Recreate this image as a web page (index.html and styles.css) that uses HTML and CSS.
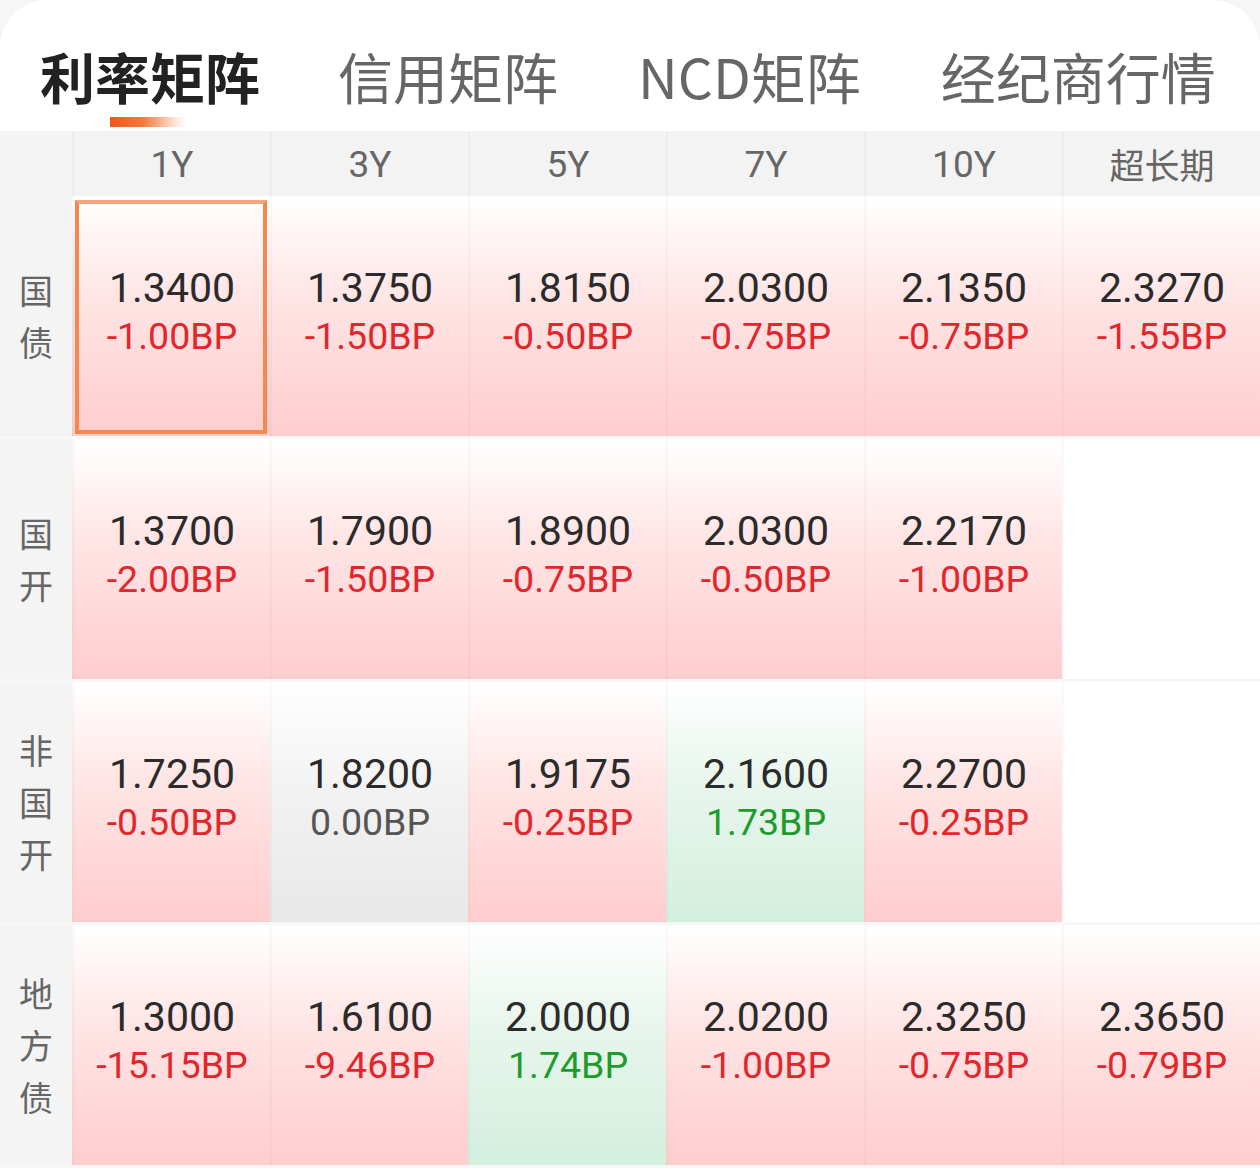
FILE: index.html
```html
<!DOCTYPE html>
<html lang="zh-CN">
<head>
<meta charset="utf-8">
<title>利率矩阵</title>
<link rel="stylesheet" href="styles.css">
</head>
<body>
<div class="card">
  <nav class="tabs">
    <div class="tab active">利率矩阵<span class="bar"></span></div>
    <div class="tab">信用矩阵</div>
    <div class="tab">NCD矩阵</div>
    <div class="tab">经纪商行情</div>
  </nav>
  <div class="matrix">
    <div class="row head">
      <div class="label"></div>
      <div class="hcell">1Y</div>
      <div class="hcell">3Y</div>
      <div class="hcell">5Y</div>
      <div class="hcell">7Y</div>
      <div class="hcell">10Y</div>
      <div class="hcell cjk">超长期</div>
    </div>
    <div class="row">
      <div class="label"><span>国</span><span>债</span></div>
      <div class="cell up selected"><div class="v">1.3400</div><div class="d">-1.00BP</div><span class="ring"></span></div>
      <div class="cell up"><div class="v">1.3750</div><div class="d">-1.50BP</div></div>
      <div class="cell up"><div class="v">1.8150</div><div class="d">-0.50BP</div></div>
      <div class="cell up"><div class="v">2.0300</div><div class="d">-0.75BP</div></div>
      <div class="cell up"><div class="v">2.1350</div><div class="d">-0.75BP</div></div>
      <div class="cell up"><div class="v">2.3270</div><div class="d">-1.55BP</div></div>
    </div>
    <div class="row">
      <div class="label"><span>国</span><span>开</span></div>
      <div class="cell up"><div class="v">1.3700</div><div class="d">-2.00BP</div></div>
      <div class="cell up"><div class="v">1.7900</div><div class="d">-1.50BP</div></div>
      <div class="cell up"><div class="v">1.8900</div><div class="d">-0.75BP</div></div>
      <div class="cell up"><div class="v">2.0300</div><div class="d">-0.50BP</div></div>
      <div class="cell up"><div class="v">2.2170</div><div class="d">-1.00BP</div></div>
      <div class="cell empty"></div>
    </div>
    <div class="row">
      <div class="label"><span>非</span><span>国</span><span>开</span></div>
      <div class="cell up"><div class="v">1.7250</div><div class="d">-0.50BP</div></div>
      <div class="cell flat"><div class="v">1.8200</div><div class="d">0.00BP</div></div>
      <div class="cell up"><div class="v">1.9175</div><div class="d">-0.25BP</div></div>
      <div class="cell down"><div class="v">2.1600</div><div class="d">1.73BP</div></div>
      <div class="cell up"><div class="v">2.2700</div><div class="d">-0.25BP</div></div>
      <div class="cell empty"></div>
    </div>
    <div class="row">
      <div class="label"><span>地</span><span>方</span><span>债</span></div>
      <div class="cell up"><div class="v">1.3000</div><div class="d">-15.15BP</div></div>
      <div class="cell up"><div class="v">1.6100</div><div class="d">-9.46BP</div></div>
      <div class="cell down"><div class="v">2.0000</div><div class="d">1.74BP</div></div>
      <div class="cell up"><div class="v">2.0200</div><div class="d">-1.00BP</div></div>
      <div class="cell up"><div class="v">2.3250</div><div class="d">-0.75BP</div></div>
      <div class="cell up"><div class="v">2.3650</div><div class="d">-0.79BP</div></div>
    </div>
  </div>
</div>
</body>
</html>
```
FILE: styles.css
```css
* { box-sizing: border-box; }
html, body { margin: 0; padding: 0; }
body {
  background: #f6f6f6;
  width: 1260px;
  height: 1171px;
  overflow: hidden;
  font-family: Roboto, "Noto Sans", "Noto Sans CJK SC", sans-serif;
}
.card {
  background: #fff;
  border-radius: 48px 48px 0 0;
  height: 1171px;
}
.tabs {
  display: flex;
  align-items: center;
  height: 131px;
  padding: 0 0 0 40px;
  gap: 80px;
  font-family: "Noto Sans CJK SC", sans-serif;
}
.tab {
  position: relative;
  font-size: 55px;
  line-height: 62px;
  color: #666;
  padding-top: 18px;
}
.tab.active {
  color: #222;
  font-weight: 700;
  margin-right: -2px;
}
.tab .bar {
  position: absolute;
  left: 70px;
  top: 91px;
  width: 75px;
  height: 10px;
  background: linear-gradient(90deg, #f0561a 0%, #f47a3e 45%, rgba(250,180,140,0.4) 85%, rgba(255,255,255,0) 100%);
}
.matrix {
  display: flex;
  flex-direction: column;
}
.row {
  display: grid;
  grid-template-columns: 72px repeat(6, 198px);
  height: 243px;
  border-bottom: 3px solid #f7f7f7;
}
.row.head {
  height: 65px;
  background: #f3f3f3;
  border-bottom: 0;
}
.label {
  background: #f4f4f4;
  display: flex;
  flex-direction: column;
  align-items: center;
  justify-content: center;
  font-family: "Noto Sans CJK SC", sans-serif;
  font-size: 34px;
  line-height: 52px;
  color: #666;
}
.hcell {
  display: flex;
  align-items: center;
  justify-content: center;
  font-size: 37px;
  color: #666;
  border-left: 2px solid #ececec;
  padding-top: 2px;
}
.hcell.cjk { font-family: "Noto Sans CJK SC", sans-serif; font-size: 35px; padding-top: 0; }
.cell {
  position: relative;
  display: flex;
  flex-direction: column;
  align-items: center;
  justify-content: center;
  border-left: 2px solid rgba(0,0,0,0.025);
  padding-bottom: 8px;
}
.cell .v {
  font-size: 41px;
  line-height: 48px;
  color: #2b2b2b;
}
.cell .d {
  font-size: 37.5px;
  line-height: 48px;
}
.cell.up { background: linear-gradient(180deg, #ffffff 0%, #ffe6e6 40%, #ffcdce 100%); }
.cell.up .d { color: #e2262b; }
.cell.down { background: linear-gradient(180deg, #ffffff 0%, #e9f6ee 40%, #d3efde 100%); }
.cell.down .d { color: #1d9b2b; }
.cell.flat { background: linear-gradient(180deg, #ffffff 0%, #f2f2f2 45%, #e8e8e8 100%); }
.cell.flat .d { color: #555; }
.cell.empty { background: #fff; }
.cell .ring {
  position: absolute;
  left: 1px;
  top: 4px;
  right: 3px;
  bottom: 2px;
  border: 4px solid #f5874f;
  border-top-color: #f8a47a;
}
```
